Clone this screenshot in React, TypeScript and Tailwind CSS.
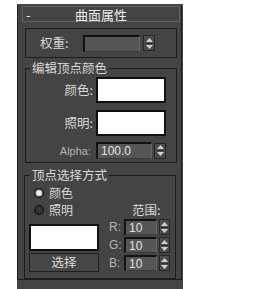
import React from 'react';

const cjk = "font-['Noto_Sans_CJK_SC',sans-serif]";

interface SpinnerProps {
  value?: string;
  boxClass: string;
}

const Arrows: React.FC<{ className: string }> = ({ className }) => (
  <div className={`flex flex-col items-center justify-center border border-[#262626] bg-[#4b4b4b] ${className}`}>
    <svg width="7" height="4" viewBox="0 0 7 4" className="mb-[1px]">
      <path d="M3.5 0 L7 4 L0 4 Z" fill="#d0d0d0" />
    </svg>
    <div className="h-px w-[7px] bg-[#333]" />
    <svg width="7" height="4" viewBox="0 0 7 4" className="mt-[1px]">
      <path d="M0 0 L7 0 L3.5 4 Z" fill="#d0d0d0" />
    </svg>
  </div>
);

const Spinner: React.FC<SpinnerProps> = ({ value, boxClass }) => (
  <div
    className={`flex items-center border-l-2 border-t-2 border-b border-r border-l-[#121212] border-t-[#121212] border-b-[#3a3a3a] border-r-[#676767] bg-[#565656] pl-[3px] font-['Liberation_Sans',sans-serif] text-[12px] leading-none text-[#e2e2e2] ${boxClass}`}
  >
    {value}
  </div>
);

const Radio: React.FC<{ checked?: boolean }> = ({ checked }) => (
  <svg width="10" height="10" viewBox="0 0 10 10">
    <circle cx="5" cy="5" r="4.3" fill={checked ? '#bdbdbd' : '#353535'} stroke="#1a1a1a" strokeWidth="1.5" />
    {checked && <circle cx="5" cy="5" r="2.2" fill="#f4f4f4" />}
  </svg>
);

const Swatch: React.FC<{ className: string }> = ({ className }) => (
  <div className={`border-2 border-[#101010] bg-white ${className}`} />
);

export default function App() {
  return (
    <div className="h-[289px] w-[270px] overflow-hidden bg-white">
      <div className="ml-[17px] mt-[4px] h-[285px] w-[166px] bg-[#444444] pt-[10px]">
        <div className="h-[274px] w-[165px] border-x border-b border-[#1c1c1c]">
          {/* rollout header */}
          <div className={`-mt-[8px] ml-[4px] flex h-[16px] w-[158px] items-center border border-[#626262] bg-[#444444] text-[13px] leading-none text-[#ececec] ${cjk}`}>
            <span className="w-[12px] pl-[3px]">-</span>
            <span className="flex-1 text-center">曲面属性</span>
            <span className="w-[12px]" />
          </div>

          {/* weight */}
          <div className={`ml-[7px] mt-[6px] flex h-[30px] w-[152px] items-center border border-[#1c1c1c] pl-[14px] text-[12.5px] leading-[16px] text-[#d8d8d8] ${cjk}`}>
            <span className="w-[43px]">权重:</span>
            <Spinner boxClass="h-[17px] w-[57px]" />
            <Arrows className="ml-[3px] h-[16px] w-[12px]" />
          </div>

          {/* vertex colour */}
          <fieldset className={`ml-[7px] mt-[3px] w-[152px] border border-[#1c1c1c] pb-[3px] text-[12.5px] leading-[16px] text-[#d8d8d8] ${cjk}`}>
            <legend className="ml-[4px] px-[2px] text-[12.5px] leading-[14px]">编辑顶点颜色</legend>
            <div className="mt-[2px] flex items-center">
              <span className="w-[67px] text-right">颜色:</span>
              <Swatch className="ml-[3px] h-[26px] w-[70px]" />
            </div>
            <div className="mt-[7px] flex items-center">
              <span className="w-[67px] text-right">照明:</span>
              <Swatch className="ml-[3px] h-[26px] w-[70px]" />
            </div>
            <div className="mt-[6px] flex items-center">
              <span className="w-[65px] text-right font-['Liberation_Sans',sans-serif] text-[11px] leading-[16px] text-[#b4b4b4]">Alpha:</span>
              <span className="w-[5px]" />
              <Spinner value="100.0" boxClass="h-[17px] w-[56px]" />
              <Arrows className="ml-[2px] h-[16px] w-[12px]" />
            </div>
          </fieldset>

          {/* vertex selection */}
          <fieldset className={`ml-[6px] mt-[5px] w-[152px] border border-[#1c1c1c] pb-[6px] text-[12.5px] leading-[16px] text-[#d8d8d8] ${cjk}`}>
            <legend className="ml-[5px] px-[2px] text-[12.5px] leading-[14px]">顶点选择方式</legend>
            <div className="mt-[2px] flex h-[17px] items-center pl-[9px] text-[12px] leading-[15px]">
              <Radio checked />
              <span className="ml-[5px]">颜色</span>
            </div>
            <div className="flex h-[17px] items-center pl-[9px] text-[12px] leading-[15px]">
              <Radio />
              <span className="ml-[5px]">照明</span>
              <span className="ml-[59px] text-[12.5px]">范围:</span>
            </div>
            <div className="flex pl-[4px]">
              <div className="mt-[6px] flex flex-col">
                <Swatch className="h-[27px] w-[70px]" />
                <button className="mt-[2px] h-[19px] w-[70px] border border-[#1e1e1e] bg-[#474747] text-[12.5px] leading-none text-[#dcdcdc]">
                  选择
                </button>
              </div>
              <div className="ml-[10px] mt-[1px] flex flex-col gap-[2px] font-['Liberation_Sans',sans-serif] text-[12px] leading-[16px] text-[#b4b4b4]">
                {['R:', 'G:', 'B:'].map((c) => (
                  <div key={c} className="flex h-[16px] items-center">
                    <span className="w-[15px]">{c}</span>
                    <Spinner value="10" boxClass="h-[16px] w-[33px]" />
                    <Arrows className="ml-[2px] h-[16px] w-[11px]" />
                  </div>
                ))}
              </div>
            </div>
          </fieldset>
        </div>
      </div>
    </div>
  );
}
